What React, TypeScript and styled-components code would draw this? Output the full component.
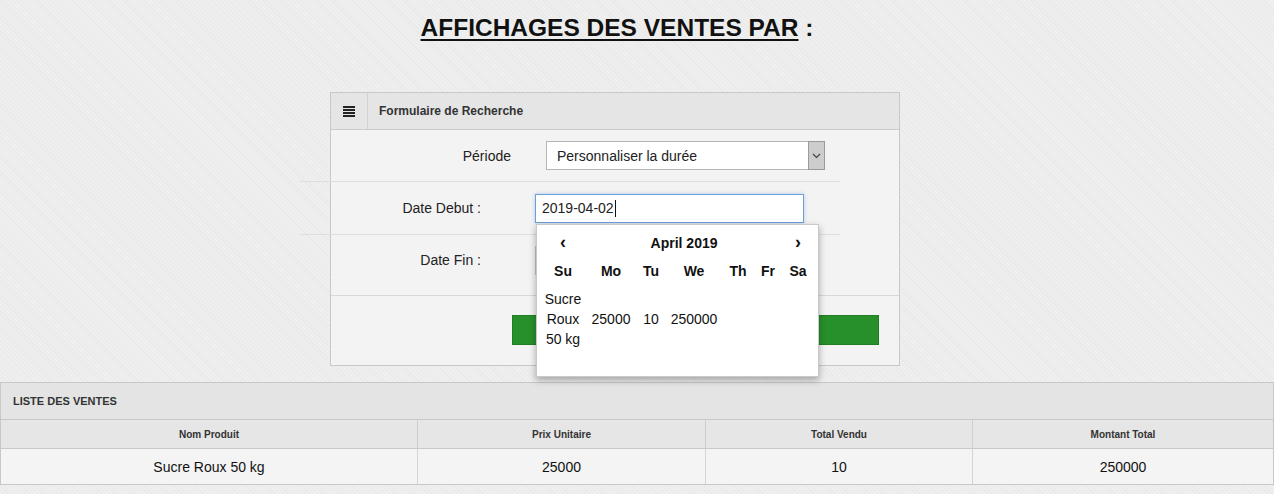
import React, { FC } from "react";
import styled, { createGlobalStyle } from "styled-components";

const GlobalStyle = createGlobalStyle`
  html, body {
    margin: 0;
    padding: 0;
  }
  body {
    font-family: "Liberation Sans", Arial, sans-serif;
    color: #111;
    background-color: #ececec;
    background-image: repeating-linear-gradient(
      45deg,
      #e9e9e9 0 1px,
      #efefef 1px 3px
    );
  }
`;

const Page = styled.div`
  position: relative;
  width: 1274px;
`;

const Title = styled.h2`
  margin: 13px 0 0;
  padding-right: 40px;
  font-size: 24.5px;
  line-height: 30px;
  font-weight: 700;
  text-align: center;
  color: #111;

  u {
    text-decoration-thickness: 2px;
    text-underline-offset: 3px;
  }
`;

const FormPanel = styled.section`
  position: relative;
  z-index: 2;
  width: 568px;
  margin: 49px 0 0 330px;
  border: 1px solid #c8c8c8;
  background: #f3f3f3;
`;

const PanelHeader = styled.header`
  display: flex;
  align-items: stretch;
  height: 36px;
  background: #e5e5e5;
  border-bottom: 1px solid #cccccc;
`;

const IconCell = styled.div`
  display: flex;
  align-items: center;
  justify-content: center;
  width: 36px;
  border-right: 1px solid #d2d2d2;
`;

const HeaderTitle = styled.h3`
  margin: 0 0 0 11px;
  align-self: center;
  font-size: 12px;
  font-weight: 700;
  color: #333;
`;

const FormBody = styled.div`
  display: flex;
  flex-direction: column;
  padding-bottom: 10px;
`;

const FormRow = styled.div<{ $height: number; $last?: boolean }>`
  display: flex;
  align-items: center;
  width: 540px;
  height: ${(p) => p.$height}px;
  margin-left: -31px;
  border-bottom: ${(p) => (p.$last ? "none" : "1px solid #dedede")};
`;

const Label = styled.label<{ $width: number; $gap: number }>`
  width: ${(p) => p.$width}px;
  margin-right: ${(p) => p.$gap}px;
  text-align: right;
  font-size: 14px;
  color: #222;
`;

const Select = styled.div`
  position: relative;
  display: flex;
  align-items: center;
  box-sizing: border-box;
  width: 279px;
  height: 29px;
  padding-left: 10px;
  background: #fff;
  border: 1px solid #b5b5b5;
  font-size: 14px;
  color: #222;
`;

const SelectArrow = styled.span`
  position: absolute;
  top: -1px;
  right: -1px;
  bottom: -1px;
  display: flex;
  align-items: center;
  justify-content: center;
  width: 17px;
  background: #cdcdcd;
  border: 1px solid #9a9a9a;
  box-sizing: border-box;
`;

const FieldWrap = styled.div`
  position: relative;
`;

const DateInput = styled.div<{ $focused?: boolean }>`
  display: flex;
  align-items: center;
  box-sizing: border-box;
  width: 269px;
  height: 29px;
  padding-left: 6px;
  background: #fff;
  border: 1px solid ${(p) => (p.$focused ? "#6f9fd8" : "#c4c4c4")};
  box-shadow: ${(p) => (p.$focused ? "0 0 4px rgba(100, 150, 220, 0.45)" : "none")};
  font-size: 14px;
  color: #222;
`;

const Caret = styled.span`
  display: inline-block;
  width: 0;
  height: 17px;
  margin-left: 1px;
  border-left: 1px solid #111;
`;

const FormFooter = styled.div`
  display: flex;
  justify-content: flex-end;
  height: 70px;
  padding: 19px 20px 0 0;
  box-sizing: border-box;
  border-top: 1px solid #d8d8d8;
`;

const SubmitButton = styled.button`
  width: 367px;
  height: 30px;
  border: 1px solid #1f7d22;
  background: #28902b;
  cursor: pointer;
`;

const Picker = styled.div`
  position: absolute;
  top: 30px;
  left: 1px;
  width: 283px;
  height: 153px;
  box-sizing: border-box;
  padding: 4px 5px 0 3px;
  background: #fff;
  border: 1px solid #c9c9c9;
  box-shadow: 0 3px 7px rgba(0, 0, 0, 0.32);
`;

const PickerTable = styled.table`
  border-collapse: collapse;
  table-layout: fixed;
  width: 274px;
  font-size: 14px;
  color: #111;

  th,
  td {
    padding: 0;
    text-align: center;
  }
`;

const PickerHead = styled.th`
  height: 28px;
  font-weight: 700;
`;

const NavArrow = styled.th`
  height: 28px;
  font-size: 18px;
  font-weight: 700;
`;

const DataCell = styled.td`
  padding-top: 4px !important;
  line-height: 20px;
  font-weight: 400;
  vertical-align: middle;
`;

const ListPanel = styled.section`
  position: relative;
  z-index: 1;
  margin-top: 16px;
  border: 1px solid #c8c8c8;
  background: #f3f3f3;
`;

const ListHeader = styled.header`
  display: flex;
  align-items: center;
  height: 36px;
  padding: 0 0 1px 12px;
  box-sizing: border-box;
  background: #e4e4e4;
  border-bottom: 1px solid #c8c8c8;
  font-size: 11px;
  font-weight: 700;
  color: #333;
  height: 37px;
`;

const SalesGrid = styled.div`
  display: grid;
  grid-template-columns: 417px 288px 267px 1fr;
`;

const HeadCell = styled.div<{ $last?: boolean }>`
  display: flex;
  align-items: center;
  justify-content: center;
  height: 28px;
  padding-top: 1px;
  box-sizing: border-box;
  height: 29px;
  background: #e6e6e6;
  border-bottom: 1px solid #c8c8c8;
  border-right: ${(p) => (p.$last ? "none" : "1px solid #cfcfcf")};
  font-size: 10px;
  font-weight: 700;
  color: #333;
`;

const BodyCell = styled.div<{ $last?: boolean }>`
  display: flex;
  align-items: center;
  justify-content: center;
  height: 35px;
  background: #f4f4f4;
  border-right: ${(p) => (p.$last ? "none" : "1px solid #d4d4d4")};
  font-size: 14px;
  color: #111;
`;

const MenuIcon: FC = () => (
  <svg width="12" height="11" viewBox="0 0 12 11">
    <rect x="0" y="0" width="12" height="2" fill="#222" />
    <rect x="0" y="3" width="12" height="2" fill="#222" />
    <rect x="0" y="6" width="12" height="2" fill="#222" />
    <rect x="0" y="9" width="12" height="2" fill="#222" />
  </svg>
);

const Chevron: FC = () => (
  <svg width="9" height="6" viewBox="0 0 9 6">
    <path d="M1 1 L4.5 4.5 L8 1" fill="none" stroke="#444" strokeWidth="1.2" />
  </svg>
);

const days = ["Su", "Mo", "Tu", "We", "Th", "Fr", "Sa"];
const dayWidths = [46, 50, 30, 56, 32, 28, 32];

const sales = [
  { name: "Sucre Roux 50 kg", price: "25000", qty: "10", total: "250000" },
];

const DatePicker: FC = () => (
  <Picker>
    <PickerTable>
      <colgroup>
        {dayWidths.map((w, i) => (
          <col key={i} style={{ width: w }} />
        ))}
      </colgroup>
      <thead>
        <tr>
          <NavArrow>‹</NavArrow>
          <PickerHead colSpan={5}>April 2019</PickerHead>
          <NavArrow>›</NavArrow>
        </tr>
        <tr>
          {days.map((d) => (
            <PickerHead key={d}>{d}</PickerHead>
          ))}
        </tr>
      </thead>
      <tbody>
        {sales.map((s) => (
          <tr key={s.name}>
            <DataCell>{s.name}</DataCell>
            <DataCell>{s.price}</DataCell>
            <DataCell>{s.qty}</DataCell>
            <DataCell>{s.total}</DataCell>
            <DataCell />
            <DataCell />
            <DataCell />
          </tr>
        ))}
      </tbody>
    </PickerTable>
  </Picker>
);

const App: FC = () => (
  <>
    <GlobalStyle />
    <Page>
      <Title>
        <u>AFFICHAGES DES VENTES PAR</u> :
      </Title>

      <FormPanel>
        <PanelHeader>
          <IconCell>
            <MenuIcon />
          </IconCell>
          <HeaderTitle>Formulaire de Recherche</HeaderTitle>
        </PanelHeader>

        <FormBody>
          <FormRow $height={51}>
            <Label $width={211} $gap={35}>Période</Label>
            <Select>
              Personnaliser la durée
              <SelectArrow>
                <Chevron />
              </SelectArrow>
            </Select>
          </FormRow>

          <FormRow $height={52}>
            <Label $width={181} $gap={54}>Date Debut :</Label>
            <FieldWrap>
              <DateInput $focused>
                2019-04-02
                <Caret />
              </DateInput>
              <DatePicker />
            </FieldWrap>
          </FormRow>

          <FormRow $height={50} $last>
            <Label $width={181} $gap={54}>Date Fin :</Label>
            <DateInput />
          </FormRow>
        </FormBody>

        <FormFooter>
          <SubmitButton type="button" aria-label="Rechercher" />
        </FormFooter>
      </FormPanel>

      <ListPanel>
        <ListHeader>LISTE DES VENTES</ListHeader>
        <SalesGrid>
          <HeadCell>Nom Produit</HeadCell>
          <HeadCell>Prix Unitaire</HeadCell>
          <HeadCell>Total Vendu</HeadCell>
          <HeadCell $last>Montant Total</HeadCell>
          {sales.map((s) => (
            <React.Fragment key={s.name}>
              <BodyCell>{s.name}</BodyCell>
              <BodyCell>{s.price}</BodyCell>
              <BodyCell>{s.qty}</BodyCell>
              <BodyCell $last>{s.total}</BodyCell>
            </React.Fragment>
          ))}
        </SalesGrid>
      </ListPanel>
    </Page>
  </>
);

export default App;
